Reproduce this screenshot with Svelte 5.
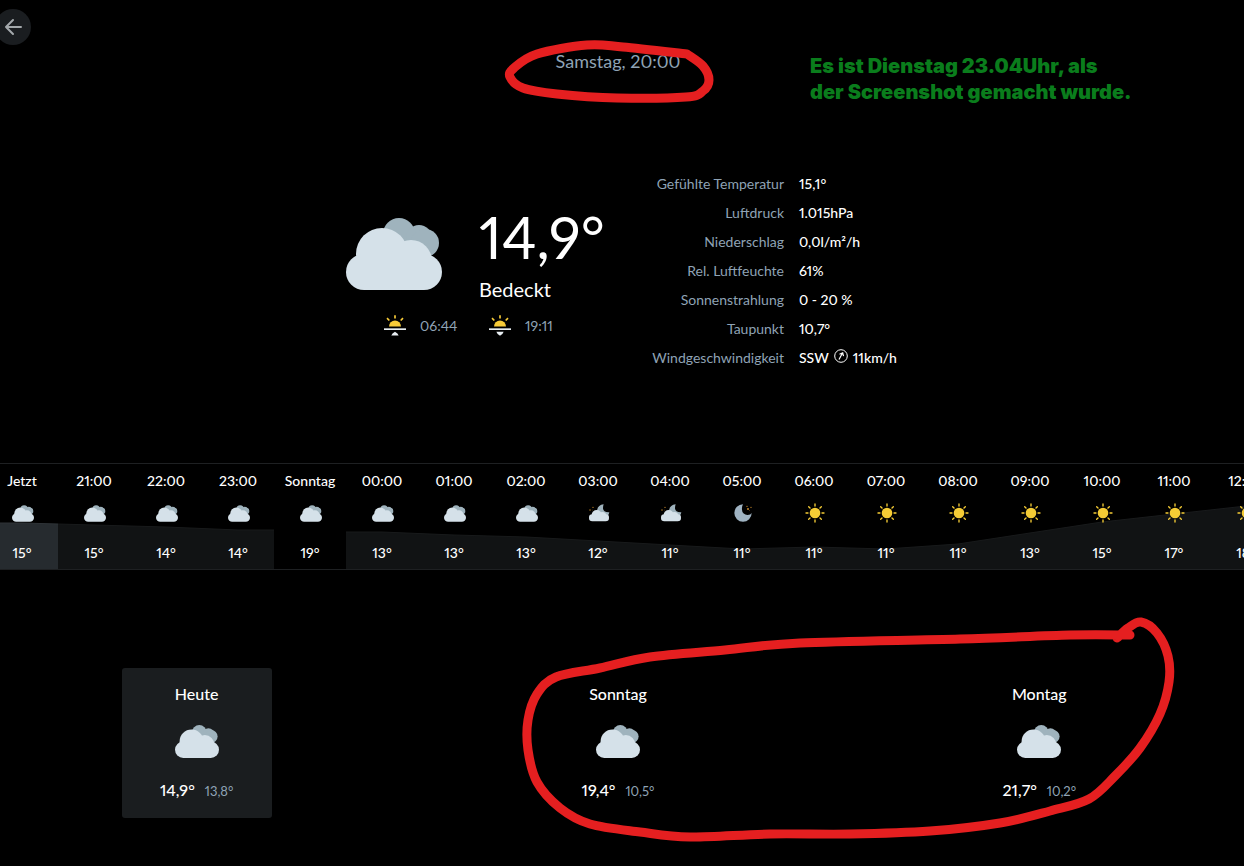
<script lang="ts">
	type Icon = 'cloudy' | 'night-cloud' | 'night' | 'sun';

	interface Hour {
		label: string;
		icon: Icon;
		temp: string;
	}

	interface Day {
		name: string;
		high: string;
		low: string;
	}

	const details = [
		{ label: 'Gefühlte Temperatur', value: '15,1°' },
		{ label: 'Luftdruck', value: '1.015hPa' },
		{ label: 'Niederschlag', value: '0,0l/m²/h' },
		{ label: 'Rel. Luftfeuchte', value: '61%' },
		{ label: 'Sonnenstrahlung', value: '0 - 20 %' },
		{ label: 'Taupunkt', value: '10,7°' }
	];

	const hours: Hour[] = [
		{ label: 'Jetzt', icon: 'cloudy', temp: '15°' },
		{ label: '21:00', icon: 'cloudy', temp: '15°' },
		{ label: '22:00', icon: 'cloudy', temp: '14°' },
		{ label: '23:00', icon: 'cloudy', temp: '14°' },
		{ label: 'Sonntag', icon: 'cloudy', temp: '19°' },
		{ label: '00:00', icon: 'cloudy', temp: '13°' },
		{ label: '01:00', icon: 'cloudy', temp: '13°' },
		{ label: '02:00', icon: 'cloudy', temp: '13°' },
		{ label: '03:00', icon: 'night-cloud', temp: '12°' },
		{ label: '04:00', icon: 'night-cloud', temp: '11°' },
		{ label: '05:00', icon: 'night', temp: '11°' },
		{ label: '06:00', icon: 'sun', temp: '11°' },
		{ label: '07:00', icon: 'sun', temp: '11°' },
		{ label: '08:00', icon: 'sun', temp: '11°' },
		{ label: '09:00', icon: 'sun', temp: '13°' },
		{ label: '10:00', icon: 'sun', temp: '15°' },
		{ label: '11:00', icon: 'sun', temp: '17°' },
		{ label: '12:00', icon: 'sun', temp: '18°' }
	];

	const days: Day[] = [
		{ name: 'Heute', high: '14,9°', low: '13,8°' },
		{ name: 'Sonntag', high: '19,4°', low: '10,5°' },
		{ name: 'Montag', high: '21,7°', low: '10,2°' }
	];

	// temperature curve, one run per day, as [x, y] inside the hourly strip
	const nowRun = [[0, 59], [36, 59], [72, 60]];
	const todayRun = [[72, 60], [108, 61], [180, 63], [252, 66], [288, 66]];
	const nextRun = [
		[360, 68], [396, 68], [468, 71], [540, 73], [612, 77], [684, 81], [756, 85], [828, 83],
		[900, 85], [972, 80], [1044, 69], [1116, 58], [1188, 50], [1260, 42], [1296, 39]
	];
	const chartWidth = hours.length * 72;
	const chartHeight = 105;

	// freehand pen strokes over the page
	const strokes = [
		[
			[687, 54], [623, 47], [587, 45], [537, 54], [514, 68], [510, 77], [523, 88], [557, 94],
			[617, 98], [686, 97], [703, 91], [709, 80], [703, 66], [687, 54]
		],
		[
			[1117, 638], [1128, 628], [1141, 622], [1157, 633], [1168, 656], [1169, 682], [1160, 714],
			[1140, 748], [1115, 776], [1089, 799], [1050, 811], [1000, 823], [930, 831], [850, 834],
			[770, 834], [690, 837], [640, 832], [590, 824], [560, 808], [537, 782], [528, 750],
			[528, 720], [537, 694], [556, 677], [600, 668], [650, 657], [725, 650], [800, 643],
			[960, 639], [1070, 635], [1130, 635]
		]
	];

	function area(run: number[][]): string {
		const first = run[0];
		const last = run[run.length - 1];
		return `M${first[0]} ${chartHeight}L${run.map((p) => p.join(' ')).join('L')}L${last[0]} ${chartHeight}Z`;
	}

	function line(run: number[][]): string {
		return `M${run.map((p) => p.join(' ')).join('L')}`;
	}

	function smooth(points: number[][]): string {
		let d = `M${points[0].join(' ')}`;
		for (let i = 0; i < points.length - 1; i++) {
			const a = points[i - 1] ?? points[i];
			const b = points[i];
			const c = points[i + 1];
			const e = points[i + 2] ?? c;
			d += `C${b[0] + (c[0] - a[0]) / 6} ${b[1] + (c[1] - a[1]) / 6} ${c[0] - (e[0] - b[0]) / 6} ${c[1] - (e[1] - b[1]) / 6} ${c[0]} ${c[1]}`;
		}
		return d;
	}

	let selectedDay = $state(0);
</script>

{#snippet cloud()}
	<svg class="cloud" viewBox="0 0 96 72" aria-hidden="true">
		<g fill="#9fb3bd">
			<circle cx="53" cy="16" r="16" />
			<circle cx="73" cy="20" r="13" />
			<circle cx="79" cy="25" r="14" />
		</g>
		<g fill="#d5e1e9">
			<circle cx="36" cy="36" r="26" />
			<circle cx="65" cy="43" r="21" />
			<rect y="36" width="96" height="36" rx="18" />
		</g>
	</svg>
{/snippet}

{#snippet horizon(arrow: string)}
	<svg class="horizon" viewBox="0 0 66 62" aria-hidden="true">
		<path d="M15 34a18 18 0 0 1 36 0z" fill="#f7cb38" />
		<path d="M33 0v10M9 9l7 7M57 9l-7 7" stroke="#f7cb38" stroke-width="5" />
		<path d="M0 42h66" stroke="#e8eef2" stroke-width="5" />
		<path d={arrow} fill="#e8eef2" />
	</svg>
{/snippet}

{#snippet hourIcon(icon: Icon)}
	{#if icon === 'cloudy'}
		{@render cloud()}
	{:else if icon === 'night-cloud'}
		<svg viewBox="0 0 66 54" aria-hidden="true">
			<path d="M47 1A22 22 0 0 0 27 20l18 17 14-2q4-3 5-10-18 1-19-12 0-7 2-12z" fill="#9fb3bd" />
			<g fill="#d5e1e9">
				<circle cx="26" cy="33" r="15" />
				<circle cx="43" cy="36" r="12" />
				<rect x="3" y="31" width="60" height="21" rx="10" />
			</g>
			<g fill="#c98a2c">
				<circle cx="6" cy="18" r="2" />
				<circle cx="15" cy="10" r="2" />
				<circle cx="13" cy="18" r="1" />
			</g>
		</svg>
	{:else if icon === 'night'}
		<svg viewBox="0 0 66 54" aria-hidden="true">
			<path d="M33 1a26 26 0 1 0 26 26Q56 33 47 33A16 16 0 0 1 30 17Q29 8 33 1z" fill="#9fb3c2" />
			<g fill="#c98a2c">
				<circle cx="45" cy="7" r="2" />
				<circle cx="57" cy="10" r="2" />
				<circle cx="48" cy="15" r="3" />
				<circle cx="53" cy="20" r="1" />
			</g>
		</svg>
	{:else}
		<svg viewBox="0 0 66 54" aria-hidden="true">
			<circle cx="33" cy="27" r="16" fill="#f5cc35" />
			<path
				d="M33 6V0M33 48v6M12 27H6M54 27h6M18 12l-4-4M48 12l4-4M18 42l-4 4M48 42l4 4"
				stroke="#f5cc35"
				stroke-width="4"
				stroke-linecap="round"
			/>
		</svg>
	{/if}
{/snippet}

<div class="page">
	<main>
		<header>
			<button class="back" aria-label="Zurück">
				<svg viewBox="0 0 18 18" aria-hidden="true">
					<path d="M17 9H2M9 2L2 9l7 7" fill="none" stroke="#a3a8ab" stroke-width="2" stroke-linecap="round" stroke-linejoin="round" />
				</svg>
			</button>
			<h1>Samstag, 20:00</h1>
		</header>

		<section class="current">
			<div class="summary">
				<div class="overview">
					{@render cloud()}
					<div>
						<div class="temperature">14,9°</div>
						<div class="condition">Bedeckt</div>
					</div>
				</div>
				<div class="sun-times">
					{@render horizon('M22 61Q24 55 33 50q9 5 11 11z')}
					<span>06:44</span>
					{@render horizon('M22 50h22q-2 7-11 12-9-5-11-12z')}
					<span>19:11</span>
				</div>
			</div>
			<dl>
				{#each details as detail}
					<dt>{detail.label}</dt>
					<dd>{detail.value}</dd>
				{/each}
				<dt>Windgeschwindigkeit</dt>
				<dd class="wind">
					SSW
					<svg viewBox="0 0 14 14" fill="none" stroke="#fff" aria-hidden="true">
						<circle cx="7" cy="7" r="6.3" />
						<path d="M5 10.5L8.5 4M5.5 5.2L8.7 3.8L9.5 7.2" stroke-width="1.2" />
					</svg>
					11km/h
				</dd>
			</dl>
		</section>

		<section class="hourly">
			<svg class="chart" width={chartWidth} height={chartHeight} aria-hidden="true">
				<path d={area(nowRun)} fill="#262b2f" />
				<path d={area(todayRun)} fill="#111314" />
				<path d={area(nextRun)} fill="#111314" />
				<path d={line(nowRun)} fill="none" stroke="#2e3337" />
				<path d={line(todayRun)} fill="none" stroke="#181a1b" />
				<path d={line(nextRun)} fill="none" stroke="#181a1b" />
			</svg>
			<ol>
				{#each hours as hour}
					<li>
						<span>{hour.label}</span>
						<div class="hour-icon">{@render hourIcon(hour.icon)}</div>
						<span>{hour.temp}</span>
					</li>
				{/each}
			</ol>
		</section>

		<section class="days">
			{#each days as day, i}
				<button class="day" class:active={selectedDay === i} onclick={() => (selectedDay = i)}>
					<span class="name">{day.name}</span>
					{@render cloud()}
					<span class="range">
						<span class="high">{day.high}</span>
						<span class="low">{day.low}</span>
					</span>
				</button>
			{/each}
		</section>
	</main>

	<p class="note">Es ist Dienstag 23.04Uhr, als<br />der Screenshot gemacht wurde.</p>

	<svg class="marker" width="1244" height="866" aria-hidden="true">
		{#each strokes as points}
			<path d={smooth(points)} />
		{/each}
	</svg>
</div>

<style>
	:global(body) {
		background: #000;
	}

	.page {
		position: relative;
		min-height: 100vh;
		overflow: hidden;
		background: #000;
		color: #fff;
		font-family: Lato, 'Liberation Sans', sans-serif;
		font-size: 14px;
		line-height: 20px;
		font-variant-numeric: proportional-nums;
	}

	main {
		margin: 0 -6px 0 -14px;
	}

	header {
		display: grid;
		grid-template-columns: 1fr auto 1fr;
		padding: 9px 9px 0;
	}

	.back {
		display: flex;
		align-items: center;
		justify-content: center;
		width: 36px;
		height: 36px;
		padding: 0;
		border: none;
		border-radius: 50%;
		background: #1a1d20;
		cursor: pointer;
	}

	.back svg {
		width: 18px;
		height: 18px;
	}

	h1 {
		margin: 40px 0 0;
		font-size: 18px;
		line-height: 24px;
		font-weight: 400;
		color: #8fa3b5;
	}

	.current {
		display: grid;
		grid-template-columns: 272px 272px;
		justify-content: center;
		margin-top: 96px;
	}

	.overview {
		display: flex;
		gap: 37px;
		padding-top: 36px;
	}

	.overview .cloud {
		width: 96px;
		height: 72px;
		margin-top: 13px;
	}

	.temperature {
		font-size: 58px;
		line-height: 64px;
	}

	.condition {
		margin-top: 8px;
		font-size: 20px;
		line-height: 24px;
	}

	.sun-times {
		display: flex;
		align-items: center;
		margin: 14px 0 0 38px;
		color: #8fa3b5;
	}

	.sun-times span {
		width: 36px;
		margin: 0 33px 0 14px;
	}

	.horizon {
		width: 22px;
		height: 21px;
	}

	dl {
		display: grid;
		grid-template-columns: 166px 1fr;
		column-gap: 15px;
		margin: 0;
		line-height: 29px;
	}

	dt {
		text-align: right;
		color: #8fa3b5;
	}

	dd {
		margin: 0;
		font-weight: 500;
		white-space: nowrap;
	}

	.wind {
		display: flex;
		gap: 5px;
	}

	.wind svg {
		width: 14px;
		height: 14px;
		margin-top: 6px;
	}

	.hourly {
		position: relative;
		height: 105px;
		margin-top: 91px;
		overflow: hidden;
		border-top: 1px solid #1e2022;
		border-bottom: 1px solid #1e2022;
	}

	.chart {
		position: absolute;
		top: 0;
		left: 0;
	}

	ol {
		position: relative;
		display: flex;
		margin: 0;
		padding: 7px 0 0;
		list-style: none;
	}

	li {
		display: flex;
		flex: 0 0 72px;
		flex-direction: column;
		align-items: center;
		font-weight: 500;
	}

	.hour-icon {
		display: flex;
		align-items: flex-end;
		height: 18px;
		margin: 13px 0 21px 1px;
	}

	.hour-icon svg {
		width: 22px;
		height: 18px;
		overflow: visible;
	}

	.hour-icon .cloud {
		height: 17px;
	}

	.days {
		display: grid;
		grid-template-columns: repeat(3, 1fr);
		justify-items: center;
		margin-top: 98px;
	}

	.day {
		display: flex;
		flex-direction: column;
		align-items: center;
		width: 150px;
		height: 150px;
		padding: 16px 0 0;
		border: none;
		border-radius: 3px;
		background: none;
		color: #fff;
		font: inherit;
		cursor: pointer;
	}

	.day.active {
		background: #1a1d1f;
	}

	.name {
		font-size: 16px;
		font-weight: 500;
	}

	.day .cloud {
		width: 44px;
		height: 33px;
		margin: 21px 0 22px;
	}

	.range {
		display: flex;
		align-items: baseline;
		gap: 10px;
	}

	.high {
		font-size: 16px;
		font-weight: 500;
	}

	.low {
		font-size: 13px;
		color: #8fa3b5;
	}

	.note {
		position: absolute;
		top: 53px;
		left: 810px;
		margin: 0;
		color: #0a7d1c;
		font-family: Inter, 'Liberation Sans', sans-serif;
		font-size: 20px;
		font-weight: 900;
		line-height: 26px;
		white-space: nowrap;
	}

	.marker {
		position: absolute;
		top: 0;
		left: 0;
		fill: none;
		stroke: #e51f20;
		stroke-width: 9px;
		stroke-linecap: round;
		stroke-linejoin: round;
		pointer-events: none;
	}
</style>
